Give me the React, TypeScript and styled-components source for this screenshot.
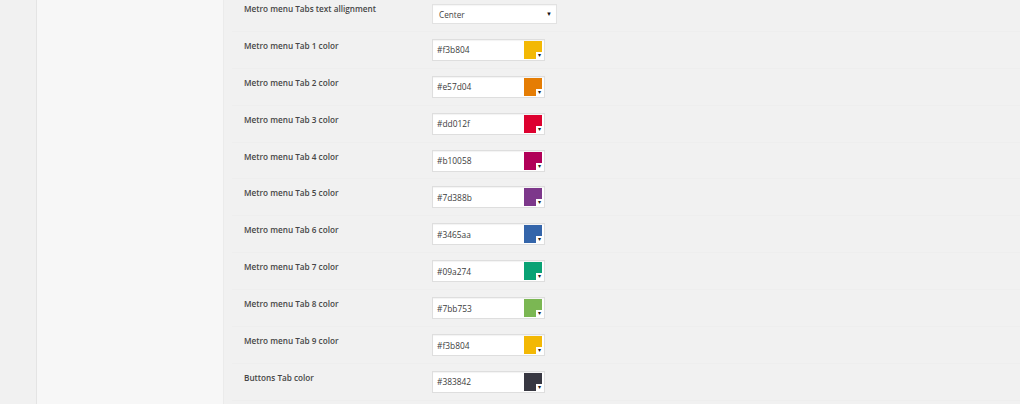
import { FC } from "react";
import styled, { createGlobalStyle } from "styled-components";

const GlobalStyle = createGlobalStyle`
	html, body {
		margin: 0;
		padding: 0;
		background: #f1f1f1;
		font-family: "Open Sans", "Liberation Sans", sans-serif;
	}
`;

const colorRows = [
	{ label: "Metro menu Tab 1 color", value: "#f3b804" },
	{ label: "Metro menu Tab 2 color", value: "#e57d04" },
	{ label: "Metro menu Tab 3 color", value: "#dd012f" },
	{ label: "Metro menu Tab 4 color", value: "#b10058" },
	{ label: "Metro menu Tab 5 color", value: "#7d388b" },
	{ label: "Metro menu Tab 6 color", value: "#3465aa" },
	{ label: "Metro menu Tab 7 color", value: "#09a274" },
	{ label: "Metro menu Tab 8 color", value: "#7bb753" },
	{ label: "Metro menu Tab 9 color", value: "#f3b804" },
	{ label: "Buttons Tab color", value: "#383842" },
];

/** colour field with its picker swatch */
const ColorField: FC<{ value: string }> = ({ value }) => (
	<FieldBox>
		<FieldText>{value}</FieldText>
		<Swatch $color={value}>
			<SwatchArrow>▾</SwatchArrow>
		</Swatch>
	</FieldBox>
);

export default function App() {
	return (
		<>
			<GlobalStyle />
			<Page>
				<Gutter />
				<SidePanel />
				<Main>
					<FormTable>
						<Row>
							<Label>Metro menu Tabs text allignment</Label>
							<SelectBox>
								<span>Center</span>
								<SelectArrow>▼</SelectArrow>
							</SelectBox>
						</Row>
						{colorRows.map((row) => (
							<Row key={row.label}>
								<Label>{row.label}</Label>
								<ColorField value={row.value} />
							</Row>
						))}
					</FormTable>
				</Main>
			</Page>
		</>
	);
}

//style_components
const Page = styled.div`
	display: flex;
	width: 1020px;
	height: 404px;
	overflow: hidden;
	background: #f1f1f1;
`;

const Gutter = styled.div`
	width: 36px;
	flex-shrink: 0;
`;

const SidePanel = styled.div`
	width: 186px;
	flex-shrink: 0;
	background: #f7f7f7;
	border-left: 1px solid #e4e4e4;
	border-right: 1px solid #ebebeb;
`;

const Main = styled.div`
	flex: 1;
	padding-left: 8px;
`;

const FormTable = styled.div`
	margin-top: -5px;
	display: flex;
	flex-direction: column;
`;

const Row = styled.div`
	display: grid;
	grid-template-columns: 188px 1fr;
	height: 35.9px;
	border-bottom: 1px solid #eeeeee;
	padding-left: 12px;
	align-items: start;
`;

const Label = styled.div`
	padding-top: 8px;
	font-size: 8.2px;
	font-weight: 600;
	color: #464646;
	line-height: 12px;
`;

const SelectBox = styled.div`
	margin-top: 9px;
	width: 125px;
	height: 20px;
	box-sizing: border-box;
	background: #fff;
	border: 1px solid #e2e2e2;
	box-shadow: inset 0 1px 1px rgba(0, 0, 0, 0.04);
	display: flex;
	align-items: center;
	justify-content: space-between;
	padding: 0 4px 0 6px;
	font-size: 8.2px;
	color: #444;
`;

const SelectArrow = styled.span`
	font-size: 6px;
	color: #111;
`;

const FieldBox = styled.div`
	margin-top: 7px;
	width: 113px;
	height: 22px;
	box-sizing: border-box;
	background: #fff;
	border: 1px solid #dedede;
	box-shadow: inset 0 1px 1px rgba(0, 0, 0, 0.05);
	display: flex;
	align-items: center;
	justify-content: space-between;
	padding: 0 2px 0 4px;
`;

const FieldText = styled.span`
	font-size: 8.4px;
	color: #3c3c3c;
`;

const Swatch = styled.div<{ $color: string }>`
	position: relative;
	width: 18px;
	height: 18px;
	background: ${(p) => p.$color};
`;

const SwatchArrow = styled.span`
	position: absolute;
	right: 0;
	bottom: 0;
	width: 6px;
	height: 7px;
	background: #fff;
	color: #222;
	font-size: 6px;
	line-height: 7px;
	text-align: center;
`;
